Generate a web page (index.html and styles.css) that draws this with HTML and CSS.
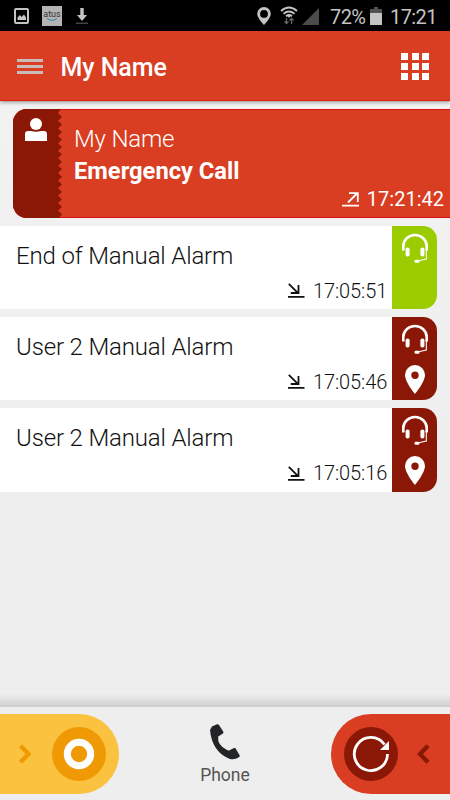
FILE: index.html
```html
<!DOCTYPE html>
<html lang="en">
<head>
<meta charset="utf-8">
<title>My Name</title>
<link rel="stylesheet" href="styles.css">
</head>
<body>
<svg class="defs" width="0" height="0" aria-hidden="true">
  <symbol id="headset" viewBox="0 0 28 30">
    <path d="M2.300 17.500V13a11.700 11 0 0 1 23.400 0v4.500" fill="none" stroke="#fff" stroke-width="2.600"/>
    <rect x="4.600" y="14.500" width="4" height="9" rx="1.800" fill="#fff"/>
    <rect x="19.400" y="14.500" width="4" height="9" rx="1.800" fill="#fff"/>
    <path d="M25.300 16v10l-9 2" fill="none" stroke="#fff" stroke-width="1.100"/>
    <rect x="13.500" y="26.800" width="5" height="3" rx="1.300" fill="#fff"/>
  </symbol>
  <symbol id="pin" viewBox="0 0 20 29">
    <path fill-rule="evenodd" d="M10 0A10 10 0 0 0 0 10c0 7 10 19 10 19s10-12 10-19A10 10 0 0 0 10 0zm0 6.500a3.700 3.700 0 1 1 0 7.400 3.700 3.700 0 0 1 0-7.400z" fill="#fff"/>
  </symbol>
  <symbol id="incoming" viewBox="0 0 17 15">
    <path d="M.8.8l9 9M2.800 10h7.700V2M0 13.800h16.500" fill="none" stroke="#111" stroke-width="1.800"/>
  </symbol>
</svg>

<header class="status">
  <svg class="s-image" width="15" height="16" viewBox="0 0 15 16"><rect x="1" y="1" width="13" height="14" rx="1" fill="none" stroke="#c4c4c4" stroke-width="2"/><path d="M3.500 12V9.500L6 7l1.500 2L10 6.500l2 3V12z" fill="#c4c4c4"/></svg>
  <span class="atus">atus<svg width="10" height="3" viewBox="0 0 10 3"><path d="M0 .5q5 3.500 10 0" fill="none" stroke="#2585ad"/></svg></span>
  <svg class="s-down" width="12" height="17" viewBox="0 0 12 17"><path d="M4.300 0h3.400v7H11l-5 6-5-6h3.300z" fill="#c4c4c4"/><path d="M0 14.500h12V16H0z" fill="#444"/></svg>
  <svg class="s-pin" width="14" height="18" viewBox="0 0 14 18"><path fill-rule="evenodd" d="M7 0a6.800 6.800 0 0 0-6.800 6.800C.2 11 7 18 7 18s6.800-7 6.800-11.200A6.800 6.800 0 0 0 7 0zm0 3a3.900 3.900 0 1 1 0 7.800A3.900 3.900 0 0 1 7 3z" fill="#c4c4c4"/></svg>
  <svg class="s-wifi" width="18" height="19" viewBox="0 0 18 19"><g fill="none" stroke="#c4c4c4" stroke-width="1.800"><path d="M1 5q8-7 16 0M3.500 7.800q5.500-4.500 11 0M6 10.300q3-2.500 6 0"/></g><path d="M7.500 10h3L9 12z" fill="#c4c4c4"/><path d="M6.500 12v6M4.500 15.500l2 2 2-2M11.500 18v-6M9.500 14.500l2-2 2 2" fill="none" stroke="#666" stroke-width="1.300"/></svg>
  <svg class="s-signal" width="17" height="17" viewBox="0 0 17 17"><path d="M17 0v17H0z" fill="#4b4b4b"/></svg>
  <span class="percent">72%</span>
  <svg class="s-battery" width="12" height="18" viewBox="0 0 12 18"><path d="M4 0h4v2h4v4H0V2h4z" fill="#505050"/><path d="M0 6h12v12H0z" fill="#c4c4c4"/></svg>
  <span class="clock">17:21</span>
</header>

<nav class="appbar">
  <span class="menu"><i></i><i></i><i></i></span>
  <h1>My Name</h1>
  <span class="apps"><i></i><i></i><i></i><i></i><i></i><i></i><i></i><i></i><i></i></span>
</nav>

<main class="list">
  <section class="emergency">
    <div class="person">
      <svg width="22" height="24" viewBox="0 0 22 24"><circle cx="11" cy="6" r="6" fill="#fff"/><path d="M3 13h3q5 1.500 10 0h3q3 0 3 3v7H0v-7q0-3 3-3z" fill="#fff"/></svg>
    </div>
    <svg class="zigzag" width="4" height="109" viewBox="0 0 4 109"><path d="M0 0H3L0 4 4 8 0 12 4 15.500 0 19.500 4 23 0 27 4 30.500 0 34.500 4 38 0 42 4 45.500 0 49 4 53 0 56.500 4 60 0 64 4 68 0 71.500 4 75.500 0 79 4 83 0 86.500 4 90.500 0 94 4 98 0 101.500 4 105.500 1 109H0z" fill="#8b1806"/></svg>
    <div class="e-body">
      <span class="e-name">My Name</span>
      <strong>Emergency Call</strong>
      <span class="e-time"><svg width="18" height="15" viewBox="0 0 18 15"><path d="M6 10.500L15.500 1M7 1.200h8.800V10M0 13.700h17" fill="none" stroke="#fff" stroke-width="1.800"/></svg>17:21:42</span>
    </div>
  </section>
  <section class="event">
    <div class="body"><span class="title">End of Manual Alarm</span><span class="time"><svg width="17" height="15"><use href="#incoming"/></svg><b>17:05:51</b></span></div>
    <div class="tag green"><svg width="28" height="30"><use href="#headset"/></svg></div>
  </section>
  <section class="event">
    <div class="body"><span class="title">User 2 Manual Alarm</span><span class="time"><svg width="17" height="15"><use href="#incoming"/></svg><b>17:05:46</b></span></div>
    <div class="tag"><svg width="28" height="30"><use href="#headset"/></svg><svg class="place" width="20" height="29"><use href="#pin"/></svg></div>
  </section>
  <section class="event">
    <div class="body"><span class="title">User 2 Manual Alarm</span><span class="time"><svg width="17" height="15"><use href="#incoming"/></svg><b>17:05:16</b></span></div>
    <div class="tag"><svg width="28" height="30"><use href="#headset"/></svg><svg class="place" width="20" height="29"><use href="#pin"/></svg></div>
  </section>
</main>
<div class="fade"></div>

<footer class="bottom">
  <div class="pill yellow">
    <svg class="chev" width="14" height="20" viewBox="0 0 14 20"><path d="M2.500 1.700L10.500 10l-8 8.300" fill="none" stroke="#ef9a04" stroke-width="4.300"/></svg>
    <svg width="54" height="54" viewBox="0 0 54 54"><circle cx="27" cy="27" r="27" fill="#ef9a04"/><circle cx="27" cy="27" r="11.700" fill="none" stroke="#fff" stroke-width="7"/></svg>
  </div>
  <div class="phone">
    <svg width="30" height="36" viewBox="0 0 30 36"><path d="M0 6L2 2.500 7 .3Q8 0 9 1l4.500 7-.5 1.500-4.800 3Q7 21 17 26q2 1 4-.5l3-1.500 1.500.2L30 32l-1.500 1.500Q25 36 20 35 2 28 0 6z" fill="#222426"/></svg>
    <span>Phone</span>
  </div>
  <div class="pill red">
    <svg width="54" height="54" viewBox="0 0 54 54"><circle cx="27" cy="27" r="27" fill="#8b1806"/><path d="M43.500 27A16.600 16.600 0 1 1 40.500 17.500" fill="none" stroke="#fff" stroke-width="2.800"/><path d="M45 14v9h-9z" fill="#fff"/></svg>
    <svg class="chev" width="14" height="20" viewBox="0 0 14 20"><path d="M11 1.700L3 10l8 8.300" fill="none" stroke="#8b1806" stroke-width="4.300"/></svg>
  </div>
</footer>
</body>
</html>
```

FILE: styles.css
```css
* { box-sizing: border-box; }
body {
  margin: 0;
  width: 450px;
  height: 800px;
  overflow: hidden;
  display: flex;
  flex-direction: column;
  background: #eee;
  font-family: Roboto, sans-serif;
}
.defs { position: absolute; }
svg { display: block; flex: none; }
.status {
  height: 31px;
  flex: none;
  display: flex;
  align-items: flex-start;
  background: #000;
  color: #c4c4c4;
  font-size: 20px;
  line-height: 34px;
}
.s-image { margin: 8px 0 0 14px; }
.atus {
  width: 20px;
  height: 20px;
  margin: 6px 0 0 13px;
  padding-top: 4px;
  background: #b4b4b4;
  color: #333;
  font-size: 9px;
  line-height: 9px;
  text-align: center;
}
.atus svg { margin: -1px auto 0; }
.s-down { margin: 8px 0 0 14px; }
.s-pin { margin: 7px 0 0 169px; }
.s-wifi { margin: 6px 0 0 9px; }
.s-signal { margin: 8px 0 0 4px; }
.percent { width: 36px; margin-left: 11px; letter-spacing: -.6px; }
.s-battery { margin: 7px 0 0 4px; }
.clock { margin-left: 8px; letter-spacing: -.6px; }
.appbar {
  position: relative;
  z-index: 1;
  height: 70px;
  flex: none;
  display: flex;
  align-items: center;
  padding: 1px 21px 0 17px;
  background: #d93d22;
  border-bottom: 1px solid #df1f08;
  box-shadow: 0 1px 4px rgba(0, 0, 0, .45);
}
.menu { display: grid; gap: 3.500px; width: 26px; margin-top: 1px; }
.menu i { height: 2.500px; background: #c9bcb8; }
h1 { margin: 4px auto 0 17.500px; color: #fff; font-size: 25px; font-weight: 500; line-height: 30px; letter-spacing: -.05px; }
.apps { display: grid; grid-template-columns: repeat(3, 7px); gap: 3px 3.500px; }
.apps i { height: 7px; background: #fff; }
.list { flex: 1; padding-top: 8px; display: flex; flex-direction: column; gap: 7.700px; background: linear-gradient(#f2f2f2, #eee 390px); }
.emergency {
  height: 109px;
  margin-left: 13px;
  display: flex;
  background: #d93d22;
  border-radius: 14px 0 0 14px;
  box-shadow: inset 0 1px #df1010, inset 0 -1px #df1010;
  overflow: hidden;
}
.person { width: 45px; padding: 9px 0 0 12px; background: #8b1806; }
.e-body { flex: 1; display: flex; flex-direction: column; padding: 14px 6px 0 12px; color: #fff; }
.e-name { font-size: 24px; font-weight: 300; line-height: 32px; letter-spacing: -.2px; }
.e-body strong { font-size: 23.700px; font-weight: 700; line-height: 32px; }
.e-time { display: flex; align-items: center; align-self: flex-end; gap: 7px; margin-top: 0; font-size: 20px; line-height: 24px; }
.event { display: flex; height: 83.500px; margin-right: 13px; }
.body { flex: 1; display: flex; flex-direction: column; padding: 14px 6px 0 16px; background: #fff; color: #111; font-weight: 300; }
.title { font-size: 24px; line-height: 32px; letter-spacing: -.15px; }
.time { display: flex; align-items: center; align-self: flex-end; gap: 8px; margin-top: 7px; font-size: 20px; line-height: 24px; }
.time b { width: 73px; font-weight: 300; letter-spacing: -.1px; }
.tag { width: 45px; display: flex; flex-direction: column; align-items: center; padding-top: 7px; background: #8b1806; border-radius: 0 14px 14px 0; }
.green { background: #9acc00; }
.place { margin-top: 11px; }
.fade { height: 13px; flex: none; background: linear-gradient(#eee, #e4e4e4 30%, #cecece); }
.bottom {
  height: 93px;
  flex: none;
  display: flex;
  justify-content: space-between;
  align-items: flex-start;
  padding-top: 6.500px;
  background: #eee;
}
.pill { width: 119px; height: 80px; display: flex; align-items: center; }
.yellow { padding-left: 18px; gap: 20px; background: #fac23e; border-radius: 0 40px 40px 0; }
.red { padding-left: 13px; gap: 19px; background: #d93d22; border-radius: 40px 0 0 40px; }
.phone { display: flex; flex-direction: column; align-items: center; padding-top: 10px; color: #555; font-size: 17.500px; line-height: 24px; }
.phone span { margin-top: 3px; }
```
